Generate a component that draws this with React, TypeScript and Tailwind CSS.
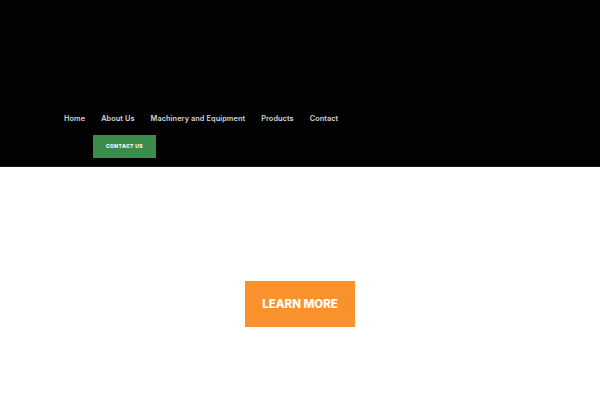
import React from 'react';

const navItems = ['Home', 'About Us', 'Machinery and Equipment', 'Products', 'Contact'];

export default function App() {
    return (
        <div className="w-[600px] h-[400px] bg-white overflow-hidden" style={{ fontFamily: 'Inter, "Noto Sans", sans-serif' }}>
            <header className="h-[167px] bg-[#020202] border-b border-[#1c1c1c] pt-[114px]">
                <nav className="flex items-center gap-[16px] pl-[64px] h-[10px]">
                    {navItems.map((item) => (
                        <a key={item} className="text-[7.3px] font-semibold text-[#d6d6d6] leading-none tracking-[0.1px]">
                            {item}
                        </a>
                    ))}
                </nav>
                <div className="pl-[93px] mt-[11px]">
                    <a className="w-[63px] h-[23px] bg-[#3b8c4b] flex items-center justify-center text-[5px] font-extrabold text-white tracking-[0.4px]">
                        CONTACT US
                    </a>
                </div>
            </header>
            <main className="flex justify-center pt-[114px]">
                <a className="w-[110px] h-[46px] pt-[2px] bg-[#f9922d] flex items-center justify-center text-[11.5px] font-extrabold text-white">
                    LEARN MORE
                </a>
            </main>
        </div>
    );
}
